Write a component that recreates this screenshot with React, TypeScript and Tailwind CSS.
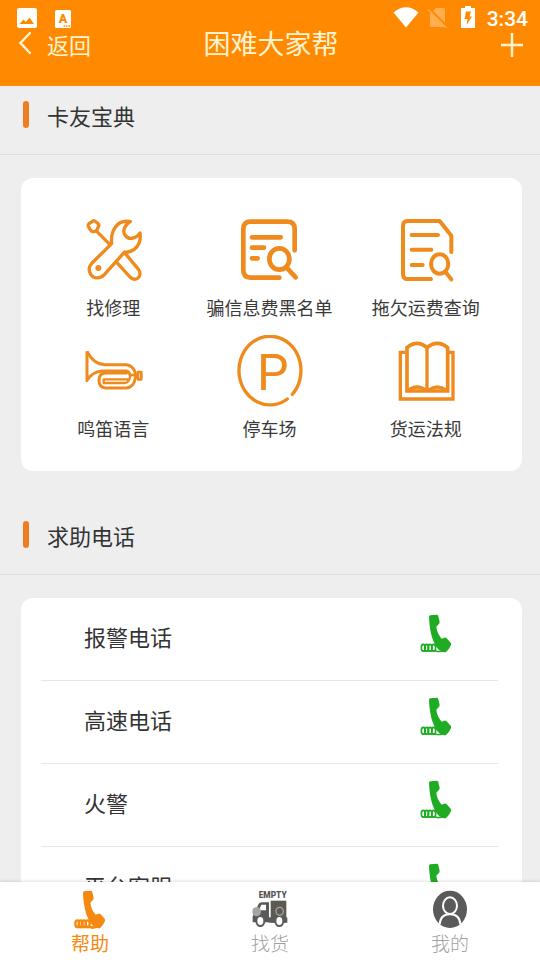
import React from "react";

function StatusBar() {
  return (
    <div className="flex h-7 items-end justify-between pl-[17px] pr-3 text-white">
      <div className="flex items-end gap-[18px]">
        <svg viewBox="0 0 20 20" className="h-5 w-5">
          <rect width="20" height="20" rx="2" fill="#fff" />
          <path d="M2.500 16 L6.500 11.500 L9 14 L12.500 9.500 L17 16 Z" fill="#ff8a00" />
        </svg>
        <svg viewBox="0 0 16 18" className="h-[18px] w-4">
          <rect width="16" height="18" rx="1.500" fill="#fff" />
          <text x="8" y="13" textAnchor="middle" fontSize="12.500" fontWeight="900" fontFamily="Roboto" fill="#ff8a00">
            A
          </text>
          <path d="M8.500 15.900h1.600M11 15.900h1.600M13.500 15.900h1.600" stroke="#ff8a00" strokeWidth="1.500" />
        </svg>
      </div>
      <div className="flex items-end">
        <svg viewBox="0 0 26 21" className="h-[21px] w-[26px]">
          <path d="M0.500 5.500 Q13 -5 25.500 5.500 L13 20.500 Z" fill="#fff" />
        </svg>
        <svg viewBox="0 0 20 20" className="ml-[9px] h-5 w-5">
          <path d="M8 0h7.500a1.500 1.500 0 0 1 1.500 1.500V19H3.500a1.500 1.500 0 0 1-1.500-1.500V6z" fill="#ffae50" />
          <path d="M1 0.500 L19.500 19" stroke="#ff8a00" strokeWidth="2.500" />
          <path d="M0 1.500 L18.500 20" stroke="#ffae50" strokeWidth="1.500" />
        </svg>
        <svg viewBox="0 0 14 22" className="ml-[13px] h-[22px] w-[14px]">
          <path d="M4 0h6v2h4v20H0V2h4z" fill="#fff" />
          <path d="M5 5.500h5l-1.500 5h2.500L5.500 19l1-6H3.500z" fill="#ff8a00" />
        </svg>
        <span className="ml-3 font-[Roboto] text-[21px] font-medium leading-[18px]">3:34</span>
      </div>
    </div>
  );
}

function Header() {
  return (
    <header className="bg-[#ff8a02] pb-[30px]">
      <StatusBar />
      <div className="grid h-7 grid-cols-3 items-center text-[#fff3cf]">
        <button type="button" className="flex items-center gap-4 pl-[19px] text-[22px] leading-7">
          <svg viewBox="0 0 12 22" className="h-[22px] w-3">
            <path d="M11 1 L1.500 11 L11 21" fill="none" stroke="currentColor" strokeWidth="2.500" strokeLinecap="round" />
          </svg>
          <span className="pt-[2px]">返回</span>
        </button>
        <h1 className="whitespace-nowrap pl-[2px] text-center text-[27px] leading-7">困难大家帮</h1>
        <button type="button" aria-label="添加" className="justify-self-end pr-4 pt-1">
          <svg viewBox="0 0 24 24" className="h-6 w-6">
            <path d="M1 12h22M12 0v24" fill="none" stroke="currentColor" strokeWidth="2.500" />
          </svg>
        </button>
      </div>
    </header>
  );
}

function RepairIcon() {
  return (
    <svg viewBox="48 27 216 216" className="h-[72px] w-[72px]">
      <g fill="none" stroke="#ef8a1c" strokeWidth="10" strokeLinecap="round" strokeLinejoin="round">
        <path d="M98 47 Q101 47 110 55 Q115 59 113 64 L107 76 Q105 80 98 80 Q91 80 89 76 L82 64 Q80 60 84 56 Z" />
        <path d="M108 80 L146 118" />
        <path d="M152 116 C148 78 168 42 208 50 C190 60 184 78 192 90 C202 106 224 102 237 84 C242 118 222 142 190 142 L130 209 C118 222 98 222 89 208 C82 196 84 184 93 174 Z" />
        <path d="M190 142 L233 194 C239 203 238 213 231 219 C223 225 214 223 207 216 L167 172" />
      </g>
      <circle cx="112" cy="189" r="9" fill="#ef8a1c" />
    </svg>
  );
}

function BlacklistIcon() {
  return (
    <svg viewBox="99 27 216 216" className="h-[72px] w-[72px]">
      <g fill="none" stroke="#ef8a1c" strokeWidth="14" strokeLinecap="round" strokeLinejoin="round">
        <path d="M284 136 V72 Q284 50 262 50 H152 Q130 50 130 72 V196 Q130 218 152 218 H238" />
        <path d="M156 97 H242 M156 128 H192 M156 160 H173" />
        <ellipse cx="238" cy="162" rx="30" ry="32" />
        <path d="M262 190 L287 217" />
      </g>
    </svg>
  );
}

function QueryIcon() {
  return (
    <svg viewBox="87 27 216 216" className="h-[72px] w-[72px]">
      <g fill="none" stroke="#ef8a1c" strokeWidth="12" strokeLinecap="round" strokeLinejoin="round">
        <path d="M271 141 V92 L236 48 H140 Q126 48 126 64 V206 Q126 222 140 222 H210" />
        <path d="M152 90 H231 M152 134 H211 M152 180 H185" />
        <ellipse cx="236" cy="177" rx="26" ry="29" />
        <path d="M254 202 L271 223" />
      </g>
    </svg>
  );
}

function HornIcon() {
  return (
    <svg viewBox="48 30 216 216" className="h-[72px] w-[72px]">
      <g fill="none" stroke="#ef8a1c" strokeWidth="9" strokeLinejoin="round">
        <path d="M78 79 Q98 118 132 119 H196 Q216 121 223 144 V160 Q218 188 196 189 H134 Q114 187 114 167 Q114 144 134 144 H200" />
        <path d="M78 79 V167 Q92 140 124 138 H196 Q206 140 208 154" />
        <path d="M208 150 Q206 174 190 174 H128 V163 H204" strokeWidth="7" />
        <path d="M208 150 H231 M223 158 H231 M231 141 H241 V163 H231 Z" strokeWidth="8" />
      </g>
    </svg>
  );
}

function ParkingIcon() {
  return (
    <svg viewBox="99 30 216 216" className="h-[72px] w-[72px]">
      <path
        d="M280 204 A93 103 0 1 0 265 218"
        transform="translate(-3 4)"
        fill="none"
        stroke="#ef8a1c"
        strokeWidth="10"
        strokeLinecap="round"
      />
      <text x="218" y="195" textAnchor="middle" fontSize="150" fontFamily="Roboto" fill="#ef8a1c">
        P
      </text>
    </svg>
  );
}

function BookIcon() {
  return (
    <svg viewBox="87 30 216 216" className="h-[72px] w-[72px]">
      <g fill="none" stroke="#ef8a1c" strokeWidth="10" strokeLinejoin="miter">
        <path d="M132 82 H118 V222 H276 V82 H264" />
        <path d="M138 198 V68 Q152 55 168 55 Q184 55 198 68 Q212 55 229 55 Q246 55 260 68 V198 Z" strokeWidth="11" />
        <path d="M198 68 V198" />
        <path d="M142 196 Q168 176 195 196 M202 196 Q229 176 256 196" />
      </g>
    </svg>
  );
}

function PhoneIcon({ coil = 5 }: { coil?: number }) {
  return (
    <svg viewBox="62 73 96 117" className="h-[39px] w-8">
      <path
        d="M93 77 L113 75 Q117 75 117 80 L121 97 Q121 103 115 107 L111 111 Q113 131 127 147 L135 144 Q139 142 142 146 L154 159 Q157 164 154 168 Q149 179 141 186 Q137 189 131 186 L120 182 C101 162 91 130 89 82 Q89 78 93 77 Z"
        fill="currentColor"
      />
      <g fill="none" stroke="currentColor" strokeWidth={coil}>
        <ellipse cx="72" cy="174" rx="6" ry="10" />
        <ellipse cx="82" cy="174" rx="6" ry="10" />
        <ellipse cx="92" cy="174" rx="6" ry="10" />
        <ellipse cx="103" cy="174" rx="6" ry="10" />
        <path d="M70 184 H108 Q124 188 134 182" />
      </g>
    </svg>
  );
}

function TruckIcon() {
  return (
    <svg viewBox="71 90 108 117" className="h-[39px] w-9">
      <text x="133" y="115" textAnchor="middle" fontSize="25" fontWeight="900" fontFamily="Roboto" fill="#555">
        EMPTY
      </text>
      <path d="M127 122 H174 V188 H127 Z" fill="#5d5a52" />
      <path d="M122 127 H100 Q92 127 89 135 L81 158 Q73 162 73 170 V187 H122 Z" fill="#5a5a5a" />
      <path d="M99 134 H113 V151 H92 Z" fill="#fff" />
      <path d="M120 172 H177 V188 H120 Z" fill="#5a5a5a" />
      <ellipse cx="96" cy="183" rx="12" ry="15" fill="#fff" stroke="#5a5a5a" strokeWidth="6" />
      <ellipse cx="153" cy="183" rx="12" ry="15" fill="#fff" stroke="#5a5a5a" strokeWidth="6" />
      <ellipse cx="85" cy="155" rx="13" ry="14" fill="#a5a5a5" />
      <ellipse cx="154" cy="154" rx="11" ry="12" fill="none" stroke="#a5a5a5" strokeWidth="4" />
    </svg>
  );
}

function ProfileIcon() {
  return (
    <svg viewBox="615 88 108 117" className="h-[39px] w-9">
      <ellipse cx="669" cy="146" rx="51" ry="56" fill="#5a5a5a" />
      <path d="M638 191 Q640 161 669 161 Q698 161 700 191" fill="none" stroke="#fff" strokeWidth="6" />
      <ellipse cx="669" cy="135" rx="21" ry="25" fill="#5a5a5a" stroke="#fff" strokeWidth="6" />
    </svg>
  );
}

const tools = [
  { name: "找修理", icon: RepairIcon },
  { name: "骗信息费黑名单", icon: BlacklistIcon },
  { name: "拖欠运费查询", icon: QueryIcon },
  { name: "鸣笛语言", icon: HornIcon },
  { name: "停车场", icon: ParkingIcon },
  { name: "货运法规", icon: BookIcon },
];

const phones = ["报警电话", "高速电话", "火警", "平台客服"];

function SectionTitle({ children }: { children: React.ReactNode }) {
  return (
    <div className="flex h-[69px] items-start gap-[18px] border-b border-[#dedede] pl-[23px] pt-[15px]">
      <span className="h-[27px] w-[6px] rounded-full bg-[#ee7d22]" />
      <h2 className="text-[22px] leading-7 text-[#333]">{children}</h2>
    </div>
  );
}

export default function App() {
  return (
    <div className="flex h-screen flex-col bg-[#eeeeef] font-['Noto_Sans_CJK_SC',sans-serif]">
      <Header />

      <main className="min-h-0 flex-1 overflow-hidden">
        <SectionTitle>卡友宝典</SectionTitle>
        <div className="ml-[21px] mr-[18px] mt-[23px] grid grid-cols-3 gap-y-[14px] rounded-xl bg-white pb-[29px] pl-[14px] pr-[18px] pt-9">
          {tools.map((tool) => (
            <button key={tool.name} type="button" className="flex flex-col items-center gap-[7px]">
              <tool.icon />
              <span className="whitespace-nowrap text-[18px] leading-7 text-[#3a3a3a]">{tool.name}</span>
            </button>
          ))}
        </div>

        <div className="mt-[35px]">
          <SectionTitle>求助电话</SectionTitle>
        </div>
        <ul className="ml-[21px] mr-[18px] mt-[23px] rounded-xl bg-white pl-5 pr-6">
          {phones.map((name) => (
            <li key={name} className="border-b border-[#e6e8e8]">
              <a href="#" className="flex h-[82px] items-start justify-between pl-[43px] pr-[46px] pt-4">
                <span className="pt-2 text-[22px] leading-7 text-[#333]">{name}</span>
                <span className="text-[#1fac24]">
                  <PhoneIcon />
                </span>
              </a>
            </li>
          ))}
        </ul>
      </main>

      {/* bottom tabs */}
      <nav className="grid h-[78px] grid-cols-3 bg-white shadow-[0_-1px_3px_rgba(0,0,0,0.12)]">
        <a href="#" className="flex flex-col items-center pt-2 text-[#f5890f]">
          <PhoneIcon coil={7} />
          <span className="text-[19px] leading-7">帮助</span>
        </a>
        <a href="#" className="flex flex-col items-center pt-2 text-[#a0a0a0]">
          <TruckIcon />
          <span className="text-[19px] font-light leading-7">找货</span>
        </a>
        <a href="#" className="flex flex-col items-center pt-2 text-[#a0a0a0]">
          <ProfileIcon />
          <span className="text-[19px] font-light leading-7">我的</span>
        </a>
      </nav>
    </div>
  );
}
